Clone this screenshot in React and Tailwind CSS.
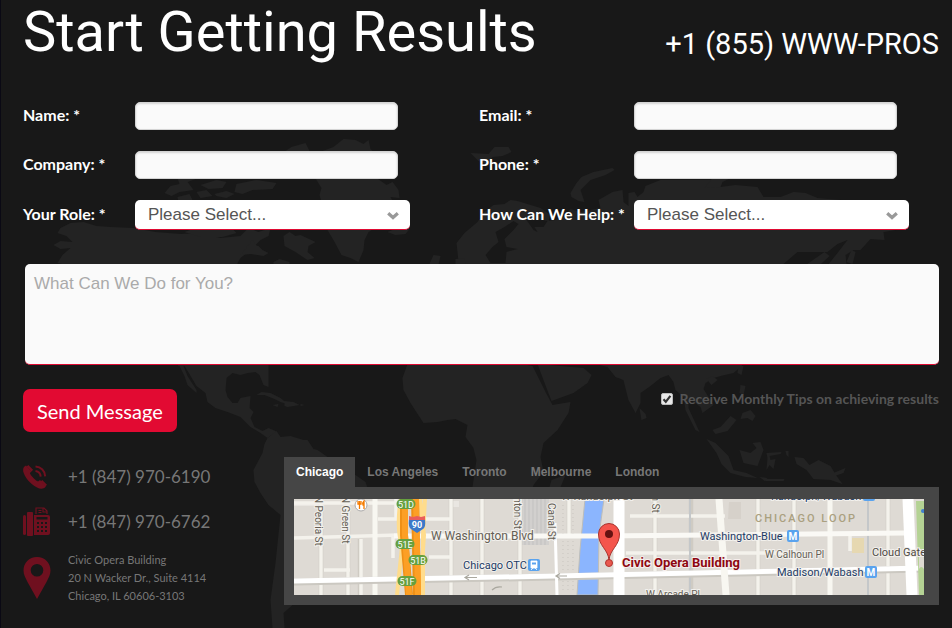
import React from "react";

const tabs = ["Chicago", "Los Angeles", "Toronto", "Melbourne", "London"];

function WorldBackdrop() {
  return (
    <svg
      aria-hidden="true"
      viewBox="0 0 952 628"
      preserveAspectRatio="xMidYMin slice"
      className="pointer-events-none absolute inset-0 h-full w-full"
      fill="#232323"
    >
      {/* North and Central America */}
      <path d="M57 263L62 255 70 248 60 249 53 245 60 241 72 242 66 236 57 233 60 228 70 223 83 222 96 226 110 227 133 228 155 232 180 234 200 233 220 238 240 236 248 228 258 232 270 228 268 236 260 240 250 250 240 258 237 263 240 285 255 290 262 305 266 290 285 300 300 315 300 325 280 345 268 358 268 367 268 387 263 385 259 375 255 372 247 373 240 375 232 373 226 378 225 390 227 397 232 403 237 403 240 398 250 396 249 408 253 412 250 418 254 427 262 431 268 428 275 431 278 437 271 435 267 438 260 433 250 427 240 417 227 412 215 408 207 402 205 393 196 386 189 374 184 366 178 366 168 350 162 330 150 310 125 285 95 272 70 266z" />
      {/* Baja California */}
      <path d="M178 364L183 366 187 376 196 390 196 393 187 385 184 376z" />
      {/* Arctic islands */}
      <path d="M164 193l6-7 9-2-2-6 14-3 4 4-8 3 6 8-14 2-8 4zM177 197l12-3 3 6-14 2zM200 185l16-5 10 2-4 6-14 1zM196 192l10-2 6 6-12 2zM214 194l12-3 8 3-8 4-10-2zM236 184l20-4 20 3-4 6-20 1-10 4-8-2zM285 151l6-4 14-4 4 8-10 3zM184 232l14-5 12 2 20-2 6 6-14 4-22 0z" />
      <path d="M283 236L289 232 295 236 300 235 315 242 308 246 307 252 314 258 307 260 295 252 284 246zM240 255L252 240 258 248 268 253 263 256 250 254zM249 252l4-7 5 1 5 5zM273 262l6-3 10 3 0 3-16 0z" />
      {/* Greenland */}
      <path d="M322 151L333 147 343 139 355 140 363 144 368 140 370 149 372 151 376 178 386 185 392 182 398 190 399 198 390 197 394 205 382 208 392 215 384 222 368 232 364 240 363 250 358 262 350 258 341 255 333 240 327 230 330 215 322 205 319 195 321 188 316 180 310 165zM387 232l10-4 12 1-4 5-10 1z" />
      {/* Caribbean */}
      <path d="M256 395L261 392 270 393 280 398 287 404 280 402 274 399 264 395zM284 401l9 1 6 3-12 2-3-1zM272 405l6-1-1 3zM300 404l4 1-4 1z" />
      {/* South America */}
      <path d="M267 438L276 431 280 437 290 436 303 440 307 440 313 449 317 450 327 457 334 470 355 475 365 482 367 488 362 510 350 530 332 545 315 570 300 595 292 605 283 613 284 628 272 628 270 600 275 563 280 515 268 505 260 493 254 482 253 470 262 453 264 444z" />
      {/* Africa */}
      <path d="M407 364L430 355 500 360 532 366 545 392 552 405 570 402 568 413 557 430 543 443 540 457 543 472 533 485 525 510 510 530 492 530 478 505 472 487 476 460 473 448 465 437 467 425 455 419 447 420 437 422 423 423 410 403 403 390 402 378zM549 487L551 480 565 475 560 487z" />
      {/* Arabia */}
      <path d="M537 364L583 368 591 375 587 383 573 393 551 401 543 380z" />
      {/* Europe and Asia */}
      <path d="M457 252L456 243 464 233 477 222 484 212 493 205 504 204 510 200 517 201 540 208 550 215 548 221 530 218 526 220 533 230 537 232 534 227 543 227 547 221 555 220 563 217 570 209 580 212 600 208 598 200 612 192 622 190 623 202 628 206 628 193 634 192 637 197 643 192 645 186 660 180 717 180 720 187 735 185 757 187 763 197 780 197 793 192 805 193 817 198 840 200 870 206 895 213 910 222 901 229 883 232 884 240 870 239 860 250 853 250 845 255 846 264 838 270 825 268 837 253 847 240 837 244 827 252 797 252 783 264 805 275 810 290 790 315 765 340 750 358 740 367 733 373 720 376 713 378 705 383 703 389 708 397 713 405 702 413 700 407 688 398 688 408 699 432 695 430 685 410 683 397 675 390 673 382 668 375 660 378 650 386 640 393 640 403 635 413 628 400 623 380 615 377 607 367 580 360 540 340 490 330 440 345 430 325 465 300 463 270 458 262z" />
      <path fill="#181818" d="M492 247L498 242 495 232 504 227 513 221 518 224 513 230 504 239 506 247 517 249 506 252 505 263 490 263 485 255z" />
      <path d="M801 268L824 252 829 256 815 269zM846 262L851 250 855 252 852 264z" />
      <path d="M429 264l4-9 7 1-2 8zM455 264l0-5 9-1 1 6z" />
      {/* Arctic coast islands */}
      <path d="M570 193L576 183 581 177 593 172 612 168 614 170 605 175 590 180 580 190 584 202 578 201 571 197zM470 153L488 154 494 147 508 147 511 152 502 156 492 157 486 164 478 161zM704 188L720 187 722 182 730 178 712 178z" />
      {/* Sri Lanka, Taiwan, Philippines */}
      <path d="M639 408l6 6 1 4-5 2zM738 366l5 0-2 9-4-2zM706 379l6-3 5 4-6 5zM740 385l5 1-2 9-4-2zM742 413l8-3 5 6-3 5-5-3-7 1z" />
      {/* South-east Asia and New Guinea */}
      <path d="M712 430L720 427 730 416 736 420 727 431 715 434zM706 439L715 443 728 456 733 470 746 473 757 478 745 477 730 473 721 464 716 453zM739 450L750 453 756 448 752 443 760 442 763 450 757 466 743 463zM766 453l15-1-1 2-11 2 1 4 5-1-2 10-4-4-3 5 1-12zM764 479l20 0-1 2-18 0zM759 477l8 1-3 3zM794 457L803 458 809 465 818 460 830 466 836 476 842 484 830 480 813 479 806 470 796 464zM833 473l12-5-2 5-9 3zM785 451l3 0 0 6-2-2z" />
    </svg>
  );
}

function PhoneIcon() {
  return (
    <svg viewBox="0 0 24 24" className="h-6 w-6" fill="#6f101f" aria-hidden="true">
      <path d="M1.500 1.500L3 0.500 8.500 6.300 7 8C6.500 9.500 14 17 15.500 16.300L17 15 22.800 21 22.500 22C20.500 24 17.500 24.300 14 22.500 7 19 1.500 12 0.200 6.500 0 4 0.300 2.600 1.500 1.500z" />
      <path d="M4.500 0.800L9.300 5.600M18.500 15.800L23.300 20.500" stroke="#6f101f" strokeWidth="2.200" />
      <path d="M12.500 1.600c5.500 0.300 9.500 4.200 9.700 9.800M12.500 6c3 0.400 5 2.500 5.200 5.600" fill="none" stroke="#6f101f" strokeWidth="2" />
    </svg>
  );
}

function FaxIcon() {
  return (
    <svg viewBox="0 0 28 30" className="h-[30px] w-7" fill="#6f101f" aria-hidden="true">
      <rect x="0" y="8" width="3" height="20" rx="1.500" />
      <rect x="4" y="5" width="6" height="24" rx="1" />
      <path d="M11 8h14q2 0 2 2v16q0 2-2 2H11z" />
      <path d="M13 7V1h8l3 3v3M20 1v4h4M15.500 3.500h3M15.500 5.500h3" fill="none" stroke="#6f101f" strokeWidth="1.200" />
      <path fill="#181818" d="M13.500 10h11v2.500h-11zM14 15h2v2h-2zM18 15h2v2h-2zM22 15h2v2h-2zM14 19h2v2h-2zM18 19h2v2h-2zM22 19h2v2h-2zM14 23h2v2h-2zM18 23h2v2h-2zM22 23h2v2h-2z" />
    </svg>
  );
}

function PinIcon() {
  return (
    <svg viewBox="0 0 28 42" className="h-[42px] w-7" fill="#6f101f" aria-hidden="true">
      <path fillRule="evenodd" d="M14 0C6 0 .5 6 .5 13.500c0 4 2 7.500 4 11.500L14 42l9.500-17c2-4 4-7.500 4-11.500C27.500 6 22 0 14 0zm0 7a6.300 6.300 0 110 12.600A6.300 6.300 0 0114 7z" />
    </svg>
  );
}

function Field({ id, label, type = "text", labelWidth }) {
  return (
    <div className="flex h-7 items-center">
      <label htmlFor={id} className={`${labelWidth} shrink-0 whitespace-nowrap pb-0.5`}>{label}</label>
      <input
        id={id}
        type={type}
        className="h-7 w-full max-w-[263px] rounded-[5px] border border-[#d4d4d4] bg-[#fafafa] px-3 text-[#555] shadow-[inset_0_1px_2px_rgba(0,0,0,0.15)] outline-none"
      />
    </div>
  );
}

function SelectField({ id, label, labelWidth }) {
  return (
    <div className="flex h-[30px] items-center">
      <label htmlFor={id} className={`${labelWidth} shrink-0 whitespace-nowrap pb-0.5`}>{label}</label>
      <div className="relative h-[30px] w-full max-w-[275px]">
        <select
          id={id}
          className="h-full w-full appearance-none rounded-[5px] border-b border-[#df0a32] bg-white pl-[13px] pr-9 font-['Liberation_Sans',Arial,sans-serif] text-[17px] font-normal text-[#555] outline-none"
        >
          <option>Please Select...</option>
        </select>
        <svg aria-hidden="true" viewBox="0 0 12 8" className="pointer-events-none absolute right-[11px] top-3 h-2 w-3">
          <path d="M1.200 1.200L6 5.500l4.800-4.300" fill="none" stroke="#999" strokeWidth="3.200" />
        </svg>
      </div>
    </div>
  );
}

function ExitBadge({ x, y, children }) {
  return (
    <g>
      <rect x={x - 9.500} y={y - 5} width="19" height="10" rx="5" fill="#66a03f" />
      <text x={x} y={y + 3.500} fontSize="9" fill="#fff" textAnchor="middle">{children}</text>
    </g>
  );
}

function MetroBadge({ x, y }) {
  return (
    <g>
      <rect x={x} y={y} width="12" height="12" rx="2" fill="#5aa3ee" />
      <text x={x + 6} y={y + 9.500} fontSize="10" fontWeight="700" fill="#fff" textAnchor="middle">M</text>
    </g>
  );
}

function CityMap() {
  return (
    <svg
      role="img"
      aria-label="Map of Civic Opera Building, Chicago"
      viewBox="0 0 630 96"
      className="block h-auto w-full font-[Roboto,sans-serif]"
    >
      <rect width="630" height="96" fill="#dedad4" />
      <path d="M0 3h24v4H0zM159 2h6v6h-6z" fill="#e9e6e1" />
      {/* Rail yard */}
      <path d="M228 0h27v46h-27z" fill="#d2d0ce" />
      <path d="M231 0v46M235 0v46M239 0v46M243 0v46M247 0v46M251 0v46" stroke="#c2c1c0" strokeWidth="1" />
      <path d="M269 6v88M274 6v88M279 6v88" stroke="#c9c5bf" strokeWidth="1" strokeDasharray="1 3" />
      {/* Minor streets */}
      <g fill="none" stroke="#cfcbc3" strokeWidth="4.500">
        <path d="M27 0v96M54 0v96M66 40v56M157 0v96M188 0v96M226 0v96M275 0v36M361 0v96M397 0v96M464 0v96M500 0v96M594 0v96" />
      </g>
      <g fill="none" stroke="#f4f2ec" strokeWidth="3.500">
        <path d="M27 0v96M54 0v96M67 40v56M157 0v96M188 0v96M226 0v96M275 0v36M361 0v96M464 0v96M500 0v96M594 0v96" />
        <path d="M0 39l105-3M84 20h18V0M99 36v23M30 71h26M132 20h25M135 58h22M336 17h95M332 54h175M556 34v18" />
        <path d="M0 4h105" />
      </g>
      <path d="M81 0v96M536 0v96" stroke="#f8f7f1" strokeWidth="5" />
      <path d="M396 0v96M574 0v96" stroke="#c4c7c9" strokeWidth="2" />
      {/* River */}
      <path d="M291 0h19l-5 36-1 60h-21l3-45z" fill="#8bb5fe" stroke="#bdbdb9" strokeWidth="1" />
      {/* Main streets */}
      <path d="M0 83l260-5 370-8" fill="none" stroke="#cbc8c1" strokeWidth="7" />
      <path d="M0 82l260-5 370-8" fill="none" stroke="#fff" strokeWidth="5" />
      <path d="M100 37l205 0 306-3" fill="none" stroke="#faf9f5" strokeWidth="5" />
      <path d="M261 24l2 72" stroke="#fff" strokeWidth="3" />
      <path d="M325 0v96" stroke="#fff" strokeWidth="11" />
      <path d="M425 0l7 96" stroke="#f8f7f1" strokeWidth="7" />
      <path d="M614 0l4 96" stroke="#fff" strokeWidth="11" />
      <path d="M622 2h8v94h-5z" fill="#b4d294" />
      <path d="M625 48q5 6 5 13v9q-3-4-5 0z" fill="#ddd9d1" />
      <circle cx="629" cy="12" r="2" fill="#3f7fd0" />
      <path d="M558 39h12v15h-12z" fill="#e6d8b1" />
      <path d="M435 3h12v17h-13z" fill="#d6d1ca" />
      {/* Expressway */}
      <path d="M107 0q-5 27 1 48l-5 48M131 0l-2 36v60M126 0l4 36-4 60" fill="none" stroke="#ffdc8c" strokeWidth="4" />
      <path d="M110 0v36l5 60M121 0l2 96" fill="none" stroke="#ef9016" strokeWidth="8" />
      <path d="M111 0v36l4 60M122 0l2 96" fill="none" stroke="#fc9f25" strokeWidth="6" />
      <path d="M183 78.500H171M175 76l-4 2.500 4 2.500M273 77H262M266 74.500l-4 2.500 4 2.500M198 91q4-4 10-3" fill="none" stroke="#aaa89f" strokeWidth="1.200" />
      <ExitBadge x={112} y={5}>51D</ExitBadge>
      <ExitBadge x={111} y={45}>51E</ExitBadge>
      <ExitBadge x={124} y={61}>51B</ExitBadge>
      <ExitBadge x={113} y={82}>51F</ExitBadge>
      <path d="M115 20h16q1 8-2 10l-6 4-6-4q-3-2-2-10z" fill="#3c79c9" />
      <path d="M115 17l4 1 4-1 4 1 4-1v4h-16z" fill="#e95d5b" />
      <text x="123" y="29" fontSize="9" fontWeight="700" fill="#fff" textAnchor="middle">90</text>
      <circle cx="67" cy="6" r="6" fill="#fff" stroke="#aaa" strokeWidth="1" />
      <path d="M64 2v3h3V2M65.500 2v8M70 10V2q-2 2-1 4h1" fill="none" stroke="#f57c00" strokeWidth="1.300" />

      <g fill="#655f55" stroke="#f2f0ec" strokeWidth="2" paintOrder="stroke" fontSize="10">
        <text transform="translate(21 -3) rotate(90)">N Peoria St</text>
        <text transform="translate(48 -3) rotate(90)">N Green St</text>
        <text transform="translate(220 -13) rotate(90)">Clinton St</text>
        <text transform="translate(254 4) rotate(90)">Canal St</text>
        <text transform="translate(358 -33) rotate(90)">Franklin St</text>
        <text x="137" y="41" fontSize="12">W Washington Blvd</text>
        <text x="267" y="1" fontSize="11">W Randolph St</text>
        <text x="352" y="99">W Arcade Pl</text>
        <text x="471" y="59">W Calhoun Pl</text>
        <text x="578" y="57" fontSize="11" fill="#504b45">Cloud Gate</text>
      </g>
      <g fill="#1d3b66" stroke="#f2f0ec" strokeWidth="2" paintOrder="stroke" fontSize="11">
        <text x="169" y="70">Chicago OTC</text>
        <text x="406" y="41">Washington-Blue</text>
        <text x="483" y="77">Madison/Wabash</text>
        <text x="477" y="1">Randolph/Wabash</text>
      </g>
      <text x="461" y="23" fontSize="11" fontWeight="500" fill="#aaa07f" className="tracking-[2px]">CHICAGO LOOP</text>
      <rect x="234" y="60" width="12" height="12" rx="2" fill="#5aa3ee" />
      <path d="M237 62h6v7h-6zM237 71l2-2M243 71l-2-2" fill="#fff" stroke="#fff" strokeWidth="0.800" />
      <path d="M238 63.500h4v2h-4z" fill="#5aa3ee" />
      <MetroBadge x={493} y={31} />
      <MetroBadge x={571} y={67} />
      <MetroBadge x={569} y={-10} />
      <text x="328" y="68" fontSize="13" fontWeight="700" fill="#8d0711" stroke="#f6efed" strokeWidth="2" paintOrder="stroke">Civic Opera Building</text>
      <circle cx="315" cy="64" r="3.500" fill="#e9584e" stroke="#b1342f" strokeWidth="1" />
      <path d="M315 61C314 50 304.500 47 304.500 35a10.500 10.500 0 0121 0C325.500 47 316 50 315 61z" fill="#f4554c" stroke="#a9332d" strokeWidth="1" />
      <circle cx="315" cy="35" r="4" fill="#651211" />
    </svg>
  );
}

export default function App() {
  return (
    <main className="relative min-h-screen border-l border-[#0a0914] bg-[#181818] font-[Lato,'Open_Sans',sans-serif] text-white">
      <WorldBackdrop />
      <div className="relative pb-5 pl-[22px] pr-[13px]">
        <header className="flex items-start justify-between font-[Roboto,sans-serif]">
          <h1 className="whitespace-nowrap text-[56px] leading-[64px]">Start Getting Results</h1>
          <p className="whitespace-nowrap pt-6 text-[29px] leading-10">+1 (855) WWW-PROS</p>
        </header>

        <form onSubmit={(e) => e.preventDefault()}>
          <div className="mt-[38px] grid grid-cols-2 gap-y-[21px] pr-1 text-base font-bold">
            <Field id="name" label="Name: *" labelWidth="w-28" />
            <Field id="email" label="Email: *" type="email" labelWidth="w-[155px]" />
            <Field id="company" label="Company: *" labelWidth="w-28" />
            <Field id="phone" label="Phone: *" type="tel" labelWidth="w-[155px]" />
            <SelectField id="role" label="Your Role: *" labelWidth="w-28" />
            <SelectField id="help" label="How Can We Help: *" labelWidth="w-[155px]" />
          </div>
          <div className="mt-[34px] pl-0.5">
            <textarea
              aria-label="What Can We Do for You?"
              placeholder="What Can We Do for You?"
              className="block h-[101px] w-full resize-none rounded-[5px] border-b border-[#df0a32] bg-[#fafafa] px-[9px] py-2 font-['Liberation_Sans',Arial,sans-serif] text-[17px] leading-6 text-[#555] outline-none placeholder:text-[#aaa]"
            />
          </div>
          <div className="mt-6 flex items-start justify-between">
            <button type="submit" className="h-[43px] rounded-[7px] bg-[#e20a32] px-3.5 text-xl">Send Message</button>
            <label className="flex items-center gap-1.5 text-sm font-bold text-[#555]">
              <span className="relative block h-3 w-3">
                <input type="checkbox" defaultChecked className="peer block h-3 w-3 appearance-none rounded-xs border border-[#bbb] bg-[#e8e8e8]" />
                <svg aria-hidden="true" viewBox="0 0 12 12" className="pointer-events-none absolute inset-0 hidden h-3 w-3 peer-checked:block">
                  <path d="M2.500 6.200l2.300 2.600 4.600-6" fill="none" stroke="#333" strokeWidth="2.200" />
                </svg>
              </span>
              Receive Monthly Tips on achieving results
            </label>
          </div>
        </form>

        <div className="mt-[25px] flex items-start">
          <address className="w-[261px] shrink-0 pt-[5px] not-italic text-[#777]">
            <div className="flex h-[30px] items-center">
              <span className="w-[45px]"><PhoneIcon /></span>
              <a href="tel:+18479706190" className="text-[17px]">+1 (847) 970-6190</a>
            </div>
            <div className="mt-[15px] flex h-[30px] items-center">
              <span className="w-[45px]"><FaxIcon /></span>
              <a href="tel:+18479706762" className="text-[17px]">+1 (847) 970-6762</a>
            </div>
            <div className="mt-3.5 flex items-center">
              <span className="w-[45px]"><PinIcon /></span>
              <p className="text-[11px] leading-[18px]">
                Civic Opera Building<br />20 N Wacker Dr., Suite 4114<br />Chicago, IL 60606-3103
              </p>
            </div>
          </address>

          <section className="min-w-0 flex-1">
            <div role="tablist" className="flex font-['Liberation_Sans',Arial,sans-serif] text-xs font-bold">
              {tabs.map((name, i) => (
                <button
                  key={name}
                  type="button"
                  role="tab"
                  aria-selected={i === 0}
                  className={i === 0 ? "h-[30px] bg-[#464646] px-3 text-white" : "h-[30px] px-3 text-[#777]"}
                >
                  {name}
                </button>
              ))}
            </div>
            <div className="bg-[#464646] pb-2.5 pl-2.5 pr-[15px] pt-3">
              <CityMap />
            </div>
          </section>
        </div>
      </div>
    </main>
  );
}
